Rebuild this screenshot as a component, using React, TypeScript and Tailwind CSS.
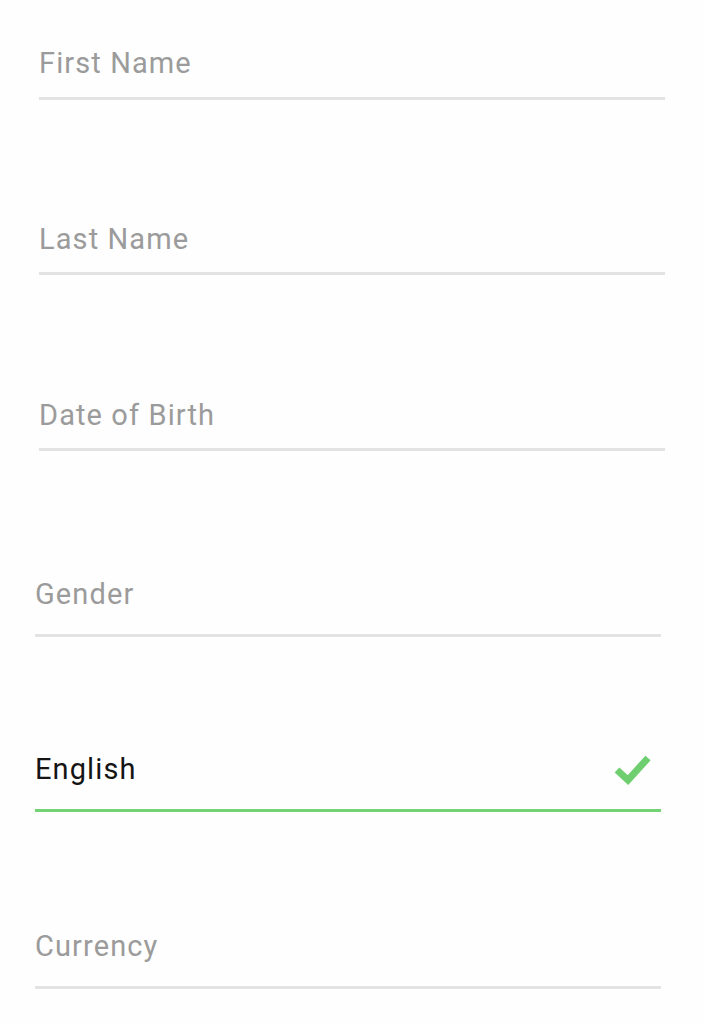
import React from "react";

type Field = {
  label: string;
  top: string;
  gap: string;
  active?: boolean;
};

const firstGroup: Field[] = [
  { label: "First Name", top: "mt-[46px]", gap: "mt-[17px]" },
  { label: "Last Name", top: "mt-[122px]", gap: "mt-[16px]" },
  { label: "Date of Birth", top: "mt-[123px]", gap: "mt-[16px]" },
];

const secondGroup: Field[] = [
  { label: "Gender", top: "mt-[126px]", gap: "mt-[23px]" },
  { label: "English", top: "mt-[115px]", gap: "mt-[23px]", active: true },
  { label: "Currency", top: "mt-[117px]", gap: "mt-[23px]" },
];

const CheckMark = () => (
  <svg width="40" height="32" viewBox="0 0 40 32" className="mr-[8px]">
    <polyline
      points="4,17 15,27 35,5"
      fill="none"
      stroke="#6fcf70"
      strokeWidth="7"
      strokeLinecap="butt"
      strokeLinejoin="miter"
    />
  </svg>
);

const FormField = ({ field }: { field: Field }) => (
  <div className={field.top}>
    <div className="flex items-center justify-between h-[34px]">
      <span
        className={`text-[29px] leading-[34px] tracking-[1.1px] ${
          field.active ? "text-[#141414]" : "text-[#9b9b9b]"
        }`}
      >
        {field.label}
      </span>
      {field.active && <CheckMark />}
    </div>
    <div
      className={`${field.gap} h-[3px] ${
        field.active ? "bg-[#72d274]" : "bg-[#e3e3e3]"
      }`}
    />
  </div>
);

export default function App() {
  return (
    <div
      className="w-[704px] h-[1024px] bg-[#fefefe] overflow-hidden"
      style={{ fontFamily: "Roboto, 'Liberation Sans', sans-serif" }}
    >
      <div className="pl-[39px] pr-[39px]">
        {firstGroup.map((f) => (
          <FormField key={f.label} field={f} />
        ))}
      </div>
      <div className="pl-[35px] pr-[43px]">
        {secondGroup.map((f) => (
          <FormField key={f.label} field={f} />
        ))}
      </div>
    </div>
  );
}
